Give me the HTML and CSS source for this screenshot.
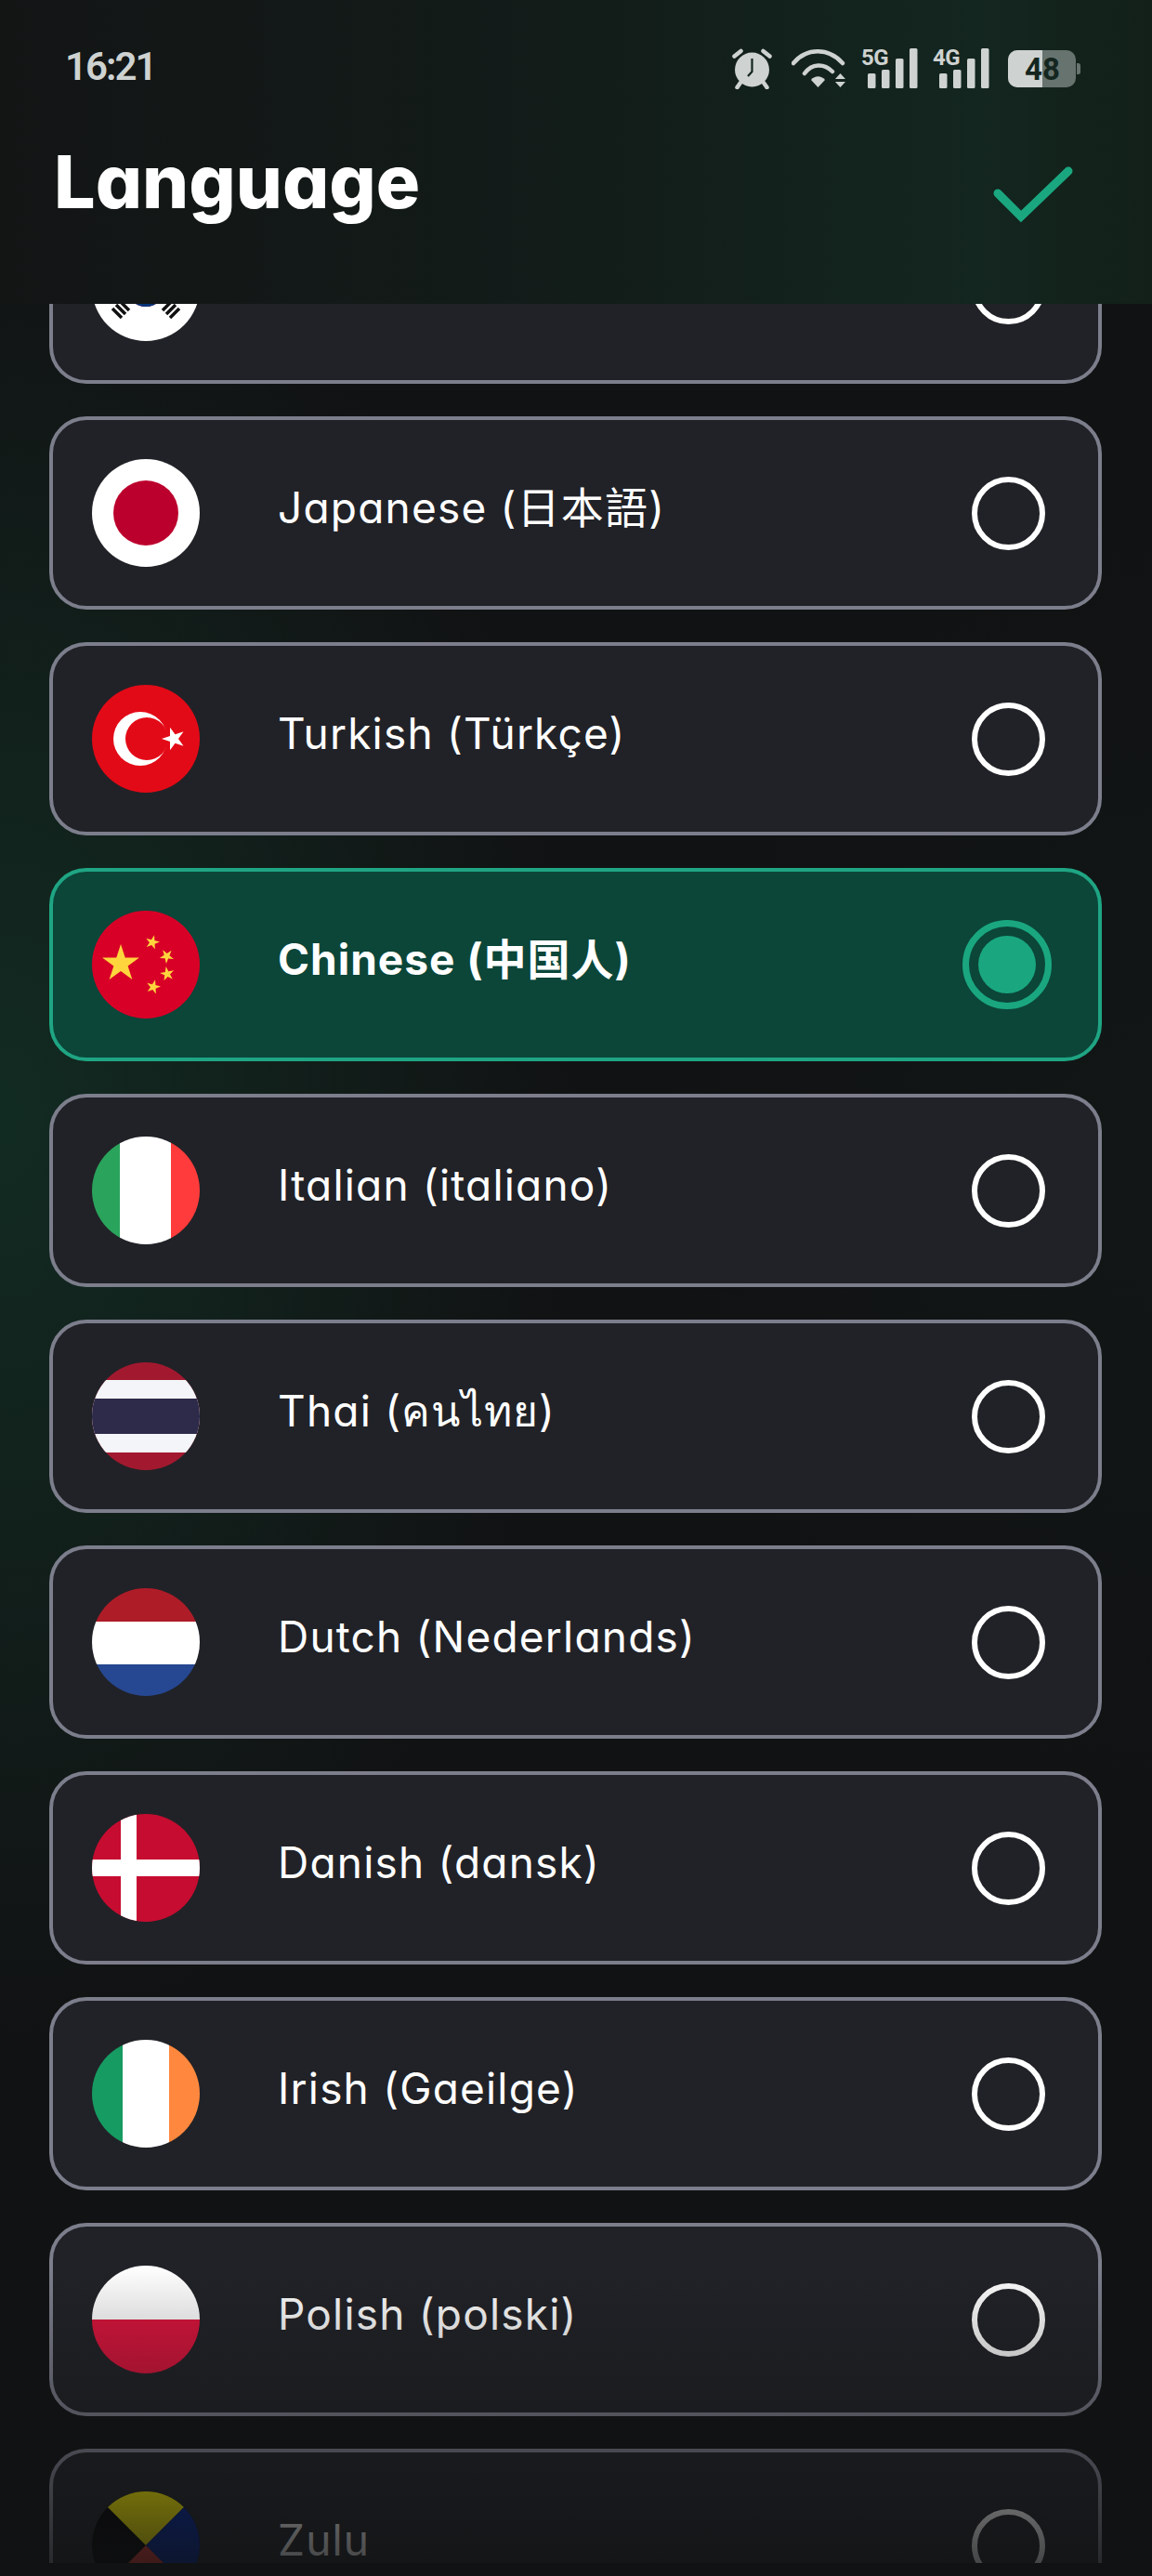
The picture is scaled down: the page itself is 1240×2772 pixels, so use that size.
FILE: index.html
```html
<!doctype html>
<html lang="en">
  <head>
    <meta charset="UTF-8">
    <meta name="viewport" content="width=device-width, initial-scale=1.0">
    <title>Language</title>
    <link rel="stylesheet" href="styles.css">
  </head>
  <body>
    <div class="screen">
      <header class="top">
        <div class="status-bar">
          <span class="clock">16:21</span>
          <div class="status-icons">
            <!-- alarm -->
            <svg class="ic-alarm" width="44" height="44" viewBox="0 0 44 44">
              <circle cx="21.5" cy="23" r="18.5" fill="#ced2d0"/>
              <path d="M2.5 8.5 9.5 3M40.500 8.500 33.500 3M9 37 5.500 42M34 37 37.500 42" stroke="#ced2d0" stroke-width="4.500" stroke-linecap="round" fill="none"/>
              <path d="M21.500 11V25L17 30" stroke="#14261f" stroke-width="2.200" fill="none"/>
            </svg>
            <!-- wifi -->
            <svg width="59" height="42" viewBox="0 0 59 42">
              <path d="M2 15C16 -2 40 -2 55 15M14 26C22 15 35 15 44 24" stroke="#ced2d0" stroke-width="4.500" stroke-linecap="round" fill="none"/>
              <path d="M21 33C25 28 32 28 36 33L28.500 41Z" fill="#ced2d0"/>
              <path d="M52.500 26 58 32H47ZM47 35H58L52.500 41Z" fill="#ced2d0"/>
            </svg>
            <!-- 5G signal -->
            <svg class="ic-signal" width="61" height="44" viewBox="0 0 61 44">
              <text class="net" x="0" y="18">5G</text>
              <rect x="7" y="27" width="8.500" height="16" rx="1.500" fill="#ced2d0"/>
              <rect x="22" y="23" width="8.500" height="20" rx="1.500" fill="#ced2d0"/>
              <rect x="37" y="11" width="8.500" height="32" rx="1.500" fill="#ced2d0"/>
              <rect x="52" y="0" width="8.500" height="43" rx="1.500" fill="#ced2d0"/>
            </svg>
            <!-- 4G signal -->
            <svg class="ic-signal" width="61" height="44" viewBox="0 0 61 44">
              <text class="net" x="0" y="18">4G</text>
              <rect x="7" y="27" width="8.500" height="16" rx="1.500" fill="#ced2d0"/>
              <rect x="22" y="23" width="8.500" height="20" rx="1.500" fill="#ced2d0"/>
              <rect x="37" y="11" width="8.500" height="32" rx="1.500" fill="#ced2d0"/>
              <rect x="52" y="0" width="8.500" height="43" rx="1.500" fill="#ced2d0"/>
            </svg>
            <!-- battery -->
            <svg class="ic-battery" width="78" height="40" viewBox="0 0 78 40">
              <rect x="0" y="0" width="73" height="40" rx="10" fill="#67736e"/>
              <path d="M74 14h1.500a2.500 2.500 0 0 1 2.500 2.500v7a2.500 2.500 0 0 1-2.500 2.500H74Z" fill="#67736e"/>
              <path d="M10 0H37V40H10A10 10 0 0 1 0 30V10A10 10 0 0 1 10 0Z" fill="#ced2d0"/>
              <text class="batt-level" x="37" y="32">48</text>
            </svg>
          </div>
        </div>
        <div class="title-bar">
          <h1>Language</h1>
          <svg class="ok" width="90" height="64" viewBox="0 0 90 64">
            <path d="M7 30 32 55 83 6" stroke="#1aa780" stroke-width="9" stroke-linecap="round" stroke-linejoin="miter" fill="none"/>
          </svg>
        </div>
      </header>

      <div class="list-wrap">
        <ul class="lang-list">
          <li class="lang">
            <svg class="flag" viewBox="0 0 116 116">
              <rect width="116" height="116" fill="#fff"/>
              <circle cx="58" cy="58" r="21" fill="#c60c30"/>
              <path d="M37 58a21 21 0 0 0 42 0Z" fill="#003478"/>
              <path d="M30 73 40 83M26 77 36 87M22 81 32 91M86 73 76 83M90 77 80 87M94 81 84 91" stroke="#111" stroke-width="3.500"/>
            </svg>
            <span class="lang-name">Korean (한국어)</span>
            <span class="radio"></span>
          </li>
          <li class="lang">
            <svg class="flag" viewBox="0 0 116 116">
              <rect width="116" height="116" fill="#fff"/>
              <circle cx="58" cy="58" r="35" fill="#bc002d"/>
            </svg>
            <span class="lang-name">Japanese (日本語)</span>
            <span class="radio"></span>
          </li>
          <li class="lang">
            <svg class="flag" viewBox="0 0 116 116">
              <rect width="116" height="116" fill="#e30a17"/>
              <circle cx="52" cy="58" r="29" fill="#fff"/>
              <circle cx="59" cy="58" r="23" fill="#e30a17"/>
              <polygon transform="translate(88 58) rotate(-90) scale(.13)" points="0,-100 22.450,-30.900 95.100,-30.900 36.300,11.800 58.800,80.900 0,38.200 -58.800,80.900 -36.300,11.800 -95.100,-30.900 -22.450,-30.900" fill="#fff"/>
            </svg>
            <span class="lang-name">Turkish (Türkçe)</span>
            <span class="radio"></span>
          </li>
          <li class="lang lang-on">
            <svg class="flag" viewBox="0 0 116 116">
              <rect width="116" height="116" fill="#d80027"/>
              <g fill="#ffd53d">
                <polygon transform="translate(31 57) scale(.21)" points="0,-100 22.450,-30.900 95.100,-30.900 36.300,11.800 58.800,80.900 0,38.200 -58.800,80.900 -36.300,11.800 -95.100,-30.900 -22.450,-30.900"/>
                <polygon transform="translate(65 34) rotate(15) scale(.08)" points="0,-100 22.450,-30.900 95.100,-30.900 36.300,11.800 58.800,80.900 0,38.200 -58.800,80.900 -36.300,11.800 -95.100,-30.900 -22.450,-30.900"/>
                <polygon transform="translate(80.500 49) rotate(40) scale(.08)" points="0,-100 22.450,-30.900 95.100,-30.900 36.300,11.800 58.800,80.900 0,38.200 -58.800,80.900 -36.300,11.800 -95.100,-30.900 -22.450,-30.900"/>
                <polygon transform="translate(81 68) rotate(-10) scale(.08)" points="0,-100 22.450,-30.900 95.100,-30.900 36.300,11.800 58.800,80.900 0,38.200 -58.800,80.900 -36.300,11.800 -95.100,-30.900 -22.450,-30.900"/>
                <polygon transform="translate(66 82) rotate(15) scale(.08)" points="0,-100 22.450,-30.900 95.100,-30.900 36.300,11.800 58.800,80.900 0,38.200 -58.800,80.900 -36.300,11.800 -95.100,-30.900 -22.450,-30.900"/>
              </g>
            </svg>
            <span class="lang-name">Chinese (中国人)</span>
            <span class="radio"></span>
          </li>
          <li class="lang">
            <svg class="flag" viewBox="0 0 116 116">
              <rect width="30" height="116" fill="#2aa35c"/>
              <rect x="30" width="55" height="116" fill="#fff"/>
              <rect x="85" width="31" height="116" fill="#ff3b3b"/>
            </svg>
            <span class="lang-name">Italian (italiano)</span>
            <span class="radio"></span>
          </li>
          <li class="lang">
            <svg class="flag" viewBox="0 0 116 116">
              <rect width="116" height="116" fill="#a2192f"/>
              <rect y="19" width="116" height="78" fill="#f4f5f8"/>
              <rect y="39" width="116" height="38" fill="#2d2a4a"/>
            </svg>
            <span class="lang-name">Thai (คนไทย)</span>
            <span class="radio"></span>
          </li>
          <li class="lang">
            <svg class="flag" viewBox="0 0 116 116">
              <rect width="116" height="36" fill="#ae1c28"/>
              <rect y="36" width="116" height="46" fill="#fff"/>
              <rect y="82" width="116" height="34" fill="#264791"/>
            </svg>
            <span class="lang-name">Dutch (Nederlands)</span>
            <span class="radio"></span>
          </li>
          <li class="lang">
            <svg class="flag" viewBox="0 0 116 116">
              <rect width="116" height="116" fill="#c60c30"/>
              <rect x="31" width="17" height="116" fill="#fff"/>
              <rect y="49" width="116" height="18" fill="#fff"/>
            </svg>
            <span class="lang-name">Danish (dansk)</span>
            <span class="radio"></span>
          </li>
          <li class="lang">
            <svg class="flag" viewBox="0 0 116 116">
              <rect width="33" height="116" fill="#169b62"/>
              <rect x="33" width="50" height="116" fill="#fff"/>
              <rect x="83" width="33" height="116" fill="#ff883e"/>
            </svg>
            <span class="lang-name">Irish (Gaeilge)</span>
            <span class="radio"></span>
          </li>
          <li class="lang">
            <svg class="flag" viewBox="0 0 116 116">
              <rect width="116" height="58" fill="#fff"/>
              <rect y="58" width="116" height="58" fill="#dc143c"/>
            </svg>
            <span class="lang-name">Polish (polski)</span>
            <span class="radio"></span>
          </li>
          <li class="lang">
            <svg class="flag" viewBox="0 0 116 116">
              <rect width="116" height="116" fill="#000"/>
              <polygon points="0,0 116,0 58,58" fill="#fff200"/>
              <polygon points="116,0 116,116 58,58" fill="#002395"/>
              <polygon points="0,116 116,116 58,58" fill="#de3831"/>
            </svg>
            <span class="lang-name">Zulu</span>
            <span class="radio"></span>
          </li>
        </ul>
      </div>
    </div>
  </body>
</html>
```

FILE: styles.css
```css
* {
  box-sizing: border-box;
}

html, body {
  margin: 0;
  padding: 0;
}

body {
  font-family: Inter, "Noto Sans", "Noto Sans CJK SC", sans-serif;
  font-feature-settings: "cv11";
  color: #fff;
  background: #111213;
}

.screen {
  display: flex;
  flex-direction: column;
  width: 1240px;
  height: 2772px;
  overflow: hidden;
  padding-bottom: 14px;
  background:
    radial-gradient(ellipse 620px 1000px at 0 1200px, rgba(18, 60, 44, .6), transparent),
    radial-gradient(ellipse 520px 700px at 1240px 1250px, rgba(18, 50, 38, .15), transparent),
    #111213;
}

.top {
  flex: none;
  position: relative;
  z-index: 2;
  height: 327px;
  background: linear-gradient(90deg, #131515 0%, #121c19 50%, #13261f 85%, #122019 100%);
}

.status-bar {
  display: flex;
  justify-content: space-between;
  align-items: flex-start;
  padding: 52px 77px 0 70px;
}

.clock {
  font-family: Roboto, sans-serif;
  font-size: 42px;
  font-weight: 600;
  line-height: 40px;
  letter-spacing: -2px;
  color: #ced2d0;
}

.status-icons {
  display: flex;
  align-items: center;
  gap: 16px;
}

.ic-alarm {
  margin-right: 4px;
}

.ic-signal {
  overflow: visible;
}

.ic-battery {
  margin-left: 4px;
}

.net {
  font-family: Roboto, sans-serif;
  font-size: 24px;
  font-weight: 700;
  letter-spacing: -.5px;
  fill: #ced2d0;
}

.batt-level {
  font-family: Roboto, sans-serif;
  font-size: 33px;
  font-weight: 700;
  text-anchor: middle;
  fill: #14261f;
}

.title-bar {
  display: flex;
  justify-content: space-between;
  align-items: flex-start;
  padding: 54px 83px 0 58px;
}

h1 {
  margin: 0;
  font-size: 79px;
  font-weight: 800;
  line-height: 90px;
}

.ok {
  margin-top: 28px;
}

.list-wrap {
  flex: 1;
  position: relative;
  overflow: hidden;
}

/* fade at the bottom of the scroll area */
.list-wrap::after {
  content: "";
  position: absolute;
  left: 0;
  right: 0;
  bottom: 0;
  height: 320px;
  background: linear-gradient(rgba(17, 18, 19, 0), rgba(17, 18, 19, .78));
}

.lang-list {
  display: flex;
  flex-direction: column;
  gap: 35px;
  margin: -122px 0 0;
  padding: 0 54px 0 53px;
  list-style: none;
}

.lang {
  flex: none;
  display: flex;
  align-items: center;
  height: 208px;
  padding: 0 50px 0 42px;
  background: #212227;
  border: 4px solid #7c7e8c;
  border-radius: 40px;
}

.flag {
  flex: none;
  width: 116px;
  height: 116px;
  border-radius: 50%;
}

.lang-name {
  flex: 1;
  margin-left: 84px;
  padding-bottom: 12px;
  font-size: 46px;
  font-weight: 380;
  line-height: 60px;
  letter-spacing: 1.200px;
  white-space: nowrap;
}

.radio {
  flex: none;
  width: 79px;
  height: 79px;
  margin-right: 7px;
  border: 6px solid #fff;
  border-radius: 50%;
}

.lang-on {
  background: #0b4639;
  border-color: #1fa583;
}

.lang-on .lang-name {
  font-weight: 700;
  letter-spacing: 1px;
}

.lang-on .radio {
  position: relative;
  width: 96px;
  height: 96px;
  margin-right: 0;
  border: 7px solid #1aa780;
}

.lang-on .radio::after {
  content: "";
  position: absolute;
  inset: 10px;
  background: #1aa780;
  border-radius: 50%;
}
```
